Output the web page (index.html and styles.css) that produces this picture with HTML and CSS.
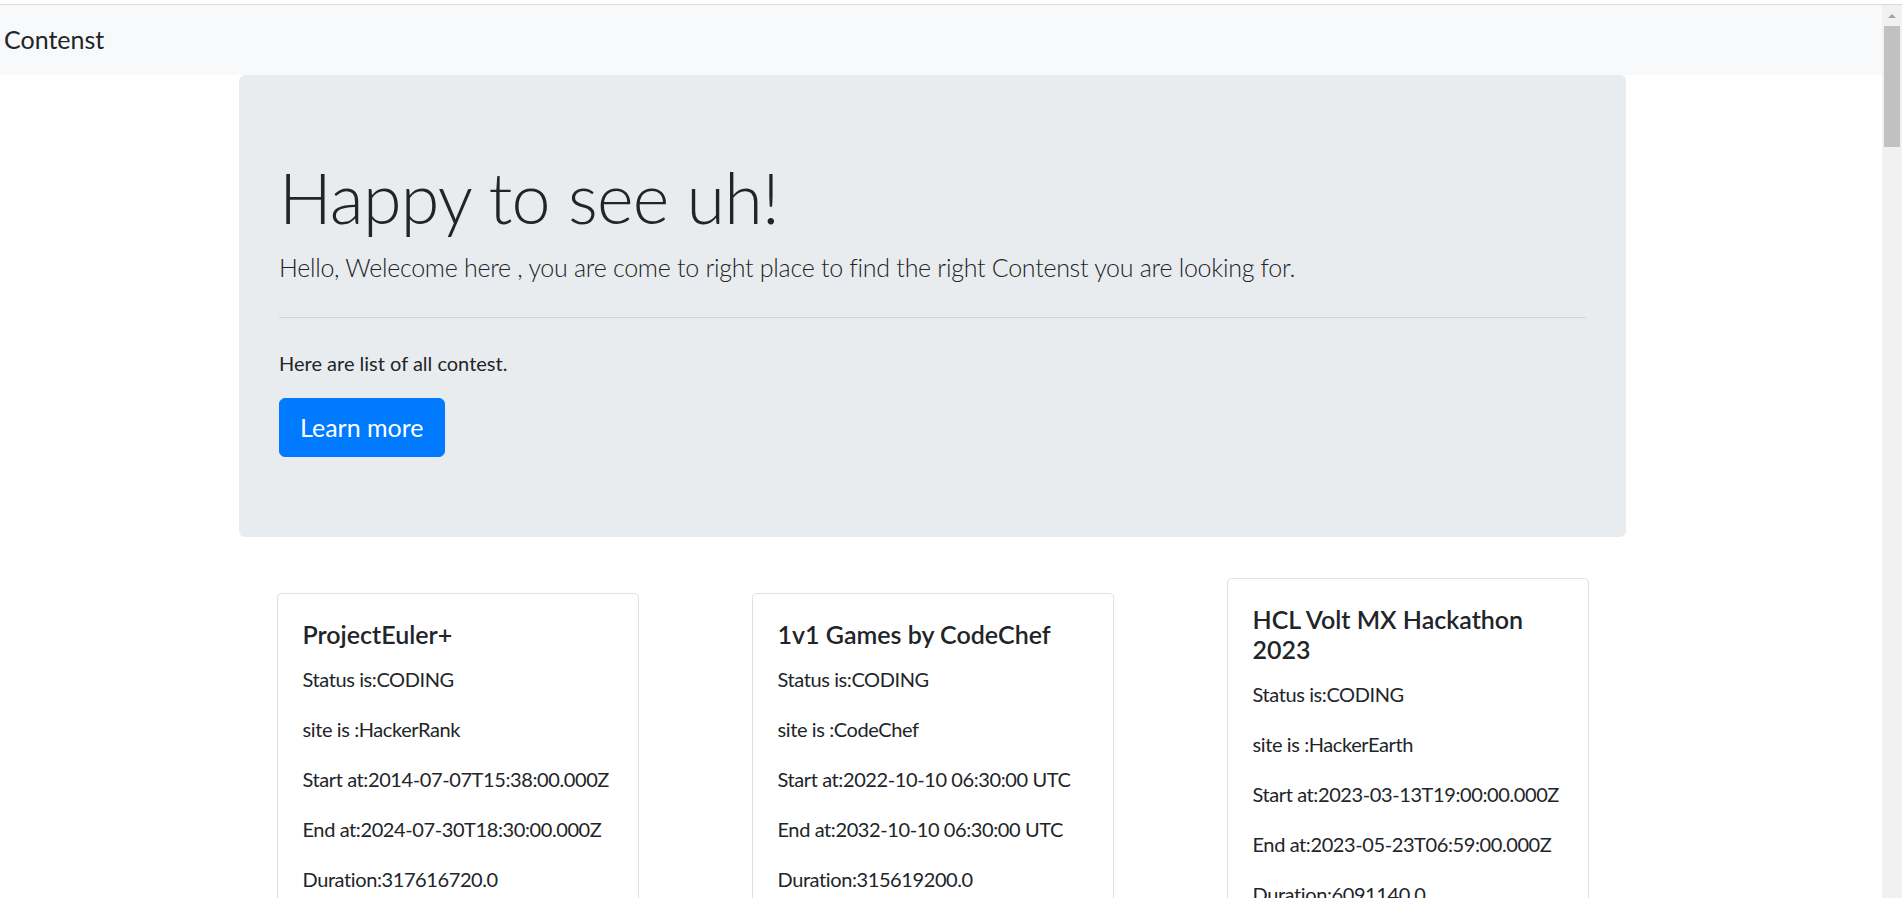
FILE: index.html
```html
<!DOCTYPE html>
<html lang="en">
<head>
<meta charset="utf-8">
<title>Contenst</title>
<link rel="stylesheet" href="styles.css">
</head>
<body>
<div class="topline"></div>
<div class="frame">
  <div class="page">
    <nav class="navbar">
      <span class="brand">Contenst</span>
    </nav>
    <div class="container">
      <section class="jumbotron">
        <h1 class="display">Happy to see uh!</h1>
        <p class="lead">Hello, Welecome here , you are come to right place to find the right Contenst you are looking for.</p>
        <hr class="divider">
        <p class="text">Here are list of all contest.</p>
        <a class="btn" href="#">Learn more</a>
      </section>
      <div class="row">
        <div class="col">
          <div class="card">
            <div class="card-body">
              <h5 class="card-title">ProjectEuler+</h5>
              <p class="card-text">Status is:CODING</p>
              <p class="card-text">site is :HackerRank</p>
              <p class="card-text">Start at:2014-07-07T15:38:00.000Z</p>
              <p class="card-text">End at:2024-07-30T18:30:00.000Z</p>
              <p class="card-text">Duration:317616720.0</p>
            </div>
          </div>
        </div>
        <div class="col">
          <div class="card">
            <div class="card-body">
              <h5 class="card-title">1v1 Games by CodeChef</h5>
              <p class="card-text">Status is:CODING</p>
              <p class="card-text">site is :CodeChef</p>
              <p class="card-text">Start at:2022-10-10 06:30:00 UTC</p>
              <p class="card-text">End at:2032-10-10 06:30:00 UTC</p>
              <p class="card-text">Duration:315619200.0</p>
            </div>
          </div>
        </div>
        <div class="col">
          <div class="card">
            <div class="card-body">
              <h5 class="card-title">HCL Volt MX Hackathon 2023</h5>
              <p class="card-text">Status is:CODING</p>
              <p class="card-text">site is :HackerEarth</p>
              <p class="card-text">Start at:2023-03-13T19:00:00.000Z</p>
              <p class="card-text">End at:2023-05-23T06:59:00.000Z</p>
              <p class="card-text">Duration:6091140.0</p>
            </div>
          </div>
        </div>
      </div>
    </div>
  </div>
  <div class="scrollbar">
    <div class="scroll-arrow"></div>
    <div class="scroll-thumb"></div>
  </div>
</div>
</body>
</html>
```
FILE: styles.css
```css
html, body {
  margin: 0;
  padding: 0;
  height: 898px;
  overflow: hidden;
  background: #fff;
}
body {
  font-family: "Lato", "Open Sans", sans-serif;
  color: #212529;
  font-size: 20px;
  line-height: 1.5;
}
.topline {
  height: 4px;
  border-bottom: 1px solid #d9d9d9;
  background: #fff;
}
.frame {
  display: flex;
  height: 893px;
}
.page {
  flex: 1;
  overflow: hidden;
}
.navbar {
  height: 70px;
  background: #f8f9fa;
  display: flex;
  align-items: center;
  padding: 0 4px;
}
.brand {
  font-size: 25px;
  line-height: 37.5px;
  color: #212529;
}
.container {
  width: 1387px;
  margin-left: 239px;
}
.jumbotron {
  background: #e9ecef;
  border-radius: 6px;
  padding: 80px 40px;
  margin-bottom: 41px;
}
.display {
  font-size: 70px;
  font-weight: 300;
  line-height: 84px;
  letter-spacing: -0.8px;
  margin: 0 0 10px;
}
.lead {
  font-size: 25px;
  font-weight: 300;
  line-height: 37.5px;
  letter-spacing: -0.28px;
  margin: 0 0 20px;
}
.divider {
  margin: 30px 0;
  border: 0;
  border-top: 1px solid rgba(0, 0, 0, 0.1);
  height: 0;
}
.text {
  margin: 0 0 20px;
  font-size: 20px;
  line-height: 30px;
}
.btn {
  display: inline-block;
  background: #007bff;
  border: 1px solid #007bff;
  color: #fff;
  font-size: 25px;
  line-height: 37.5px;
  padding: 10px 20px;
  border-radius: 6px;
  text-decoration: none;
}
.row {
  display: grid;
  grid-template-columns: repeat(3, 475px);
  margin: 0 -19px;
  align-items: center;
}
.col {
  padding: 0 19px;
  display: flex;
  justify-content: center;
}
.card {
  width: 360px;
  border: 1px solid rgba(0, 0, 0, 0.125);
  border-radius: 5px;
  background: #fff;
}
.card-body {
  padding: 25px;
}
.card-title {
  font-size: 25px;
  font-weight: 600;
  line-height: 30px;
  margin: 0 0 15px;
}
.card-text {
  margin: 0 0 20px;
  font-size: 20px;
  line-height: 30px;
  white-space: nowrap;
  letter-spacing: -0.4px;
}
.scrollbar {
  width: 20px;
  background: #f1f1f1;
  display: flex;
  flex-direction: column;
  align-items: center;
}
.scroll-arrow {
  margin-top: 9px;
  width: 0;
  height: 0;
  border-left: 4px solid transparent;
  border-right: 4px solid transparent;
  border-bottom: 4px solid #a3a3a3;
}
.scroll-thumb {
  margin-top: 8px;
  width: 16px;
  height: 121px;
  background: #c1c1c1;
}
```
